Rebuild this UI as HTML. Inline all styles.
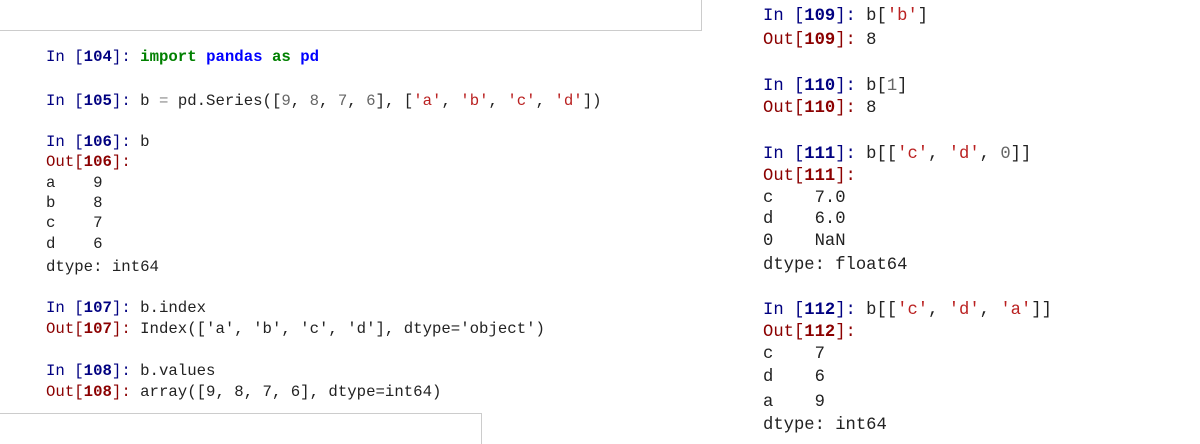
<!DOCTYPE html>
<html><head><meta charset="utf-8"><style>
html,body{margin:0;width:1200px;height:444px;overflow:hidden}
body{background:#fff;position:relative;font-family:"Liberation Mono",monospace;color:#222}
.l{position:absolute;white-space:pre;line-height:20px;height:20px}
.L{font-size:15.7px;left:46px}
.R{font-size:17.2px;left:763px}
.i{color:#000080}.o{color:#8b0000}
.i b,.o b{font-weight:bold}
.k{color:#008000;font-weight:bold}.n{color:#0000ff;font-weight:bold}
.s{color:#ba2121}.m{color:#666}.g{color:#888}
.box1{position:absolute;left:0;top:0;width:701px;height:30px;border-right:1px solid #ccc;border-bottom:1px solid #ccc}
.box2{position:absolute;left:0;top:413px;width:481px;height:30px;border-right:1px solid #ccc;border-top:1px solid #ccc}
</style></head><body>
<div class="box1"></div><div class="box2"></div>
<div class="l L" style="top:47px"><span class="i">In [<b>104</b>]:</span> <span class="k">import</span> <span class="n">pandas</span> <span class="k">as</span> <span class="n">pd</span></div>
<div class="l L" style="top:91px"><span class="i">In [<b>105</b>]:</span> b <span class="g">=</span> pd.Series([<span class="m">9</span>, <span class="m">8</span>, <span class="m">7</span>, <span class="m">6</span>], [<span class="s">'a'</span>, <span class="s">'b'</span>, <span class="s">'c'</span>, <span class="s">'d'</span>])</div>
<div class="l L" style="top:132px"><span class="i">In [<b>106</b>]:</span> b</div>
<div class="l L" style="top:152px"><span class="o">Out[<b>106</b>]:</span></div>
<div class="l L" style="top:173px">a    9</div>
<div class="l L" style="top:193px">b    8</div>
<div class="l L" style="top:213px">c    7</div>
<div class="l L" style="top:234px">d    6</div>
<div class="l L" style="top:257px">dtype: int64</div>
<div class="l L" style="top:298px"><span class="i">In [<b>107</b>]:</span> b.index</div>
<div class="l L" style="top:319px"><span class="o">Out[<b>107</b>]:</span> Index(['a', 'b', 'c', 'd'], dtype='object')</div>
<div class="l L" style="top:361px"><span class="i">In [<b>108</b>]:</span> b.values</div>
<div class="l L" style="top:382px"><span class="o">Out[<b>108</b>]:</span> array([9, 8, 7, 6], dtype=int64)</div>

<div class="l R" style="top:7px"><span class="i">In [<b>109</b>]:</span> b[<span class="s">'b'</span>]</div>
<div class="l R" style="top:31px"><span class="o">Out[<b>109</b>]:</span> 8</div>
<div class="l R" style="top:77px"><span class="i">In [<b>110</b>]:</span> b[<span class="m">1</span>]</div>
<div class="l R" style="top:99px"><span class="o">Out[<b>110</b>]:</span> 8</div>
<div class="l R" style="top:145px"><span class="i">In [<b>111</b>]:</span> b[[<span class="s">'c'</span>, <span class="s">'d'</span>, <span class="m">0</span>]]</div>
<div class="l R" style="top:167px"><span class="o">Out[<b>111</b>]:</span></div>
<div class="l R" style="top:189px">c    7.0</div>
<div class="l R" style="top:210px">d    6.0</div>
<div class="l R" style="top:232px">0    NaN</div>
<div class="l R" style="top:256px">dtype: float64</div>
<div class="l R" style="top:301px"><span class="i">In [<b>112</b>]:</span> b[[<span class="s">'c'</span>, <span class="s">'d'</span>, <span class="s">'a'</span>]]</div>
<div class="l R" style="top:323px"><span class="o">Out[<b>112</b>]:</span></div>
<div class="l R" style="top:345px">c    7</div>
<div class="l R" style="top:368px">d    6</div>
<div class="l R" style="top:393px">a    9</div>
<div class="l R" style="top:416px">dtype: int64</div>
</body></html>
